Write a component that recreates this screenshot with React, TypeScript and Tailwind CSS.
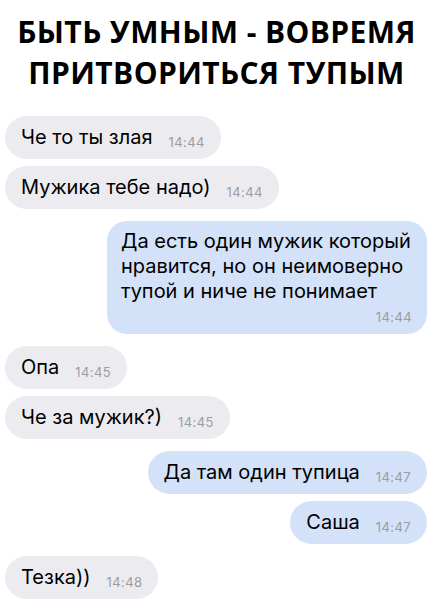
type Msg = { text: string; time: string; out?: boolean };

const messages: Msg[] = [
  { text: "Че то ты злая", time: "14:44" },
  { text: "Мужика тебе надо)", time: "14:44" },
  {
    text: "Да есть один мужик который нравится, но он неимоверно тупой и ниче не понимает",
    time: "14:44",
    out: true,
  },
  { text: "Опа", time: "14:45" },
  { text: "Че за мужик?)", time: "14:45" },
  { text: "Да там один тупица", time: "14:47", out: true },
  { text: "Саша", time: "14:47", out: true },
  { text: "Тезка))", time: "14:48" },
];

function Bubble({ msg, long }: { msg: Msg; long: boolean }) {
  const tone = msg.out ? "bg-[#d3e2f9]" : "bg-[#ececf0]";

  if (long) {
    return (
      <div className={`w-[320px] rounded-[20px] ${tone} pl-[14px] pr-[10px] pt-[8px] pb-[10px]`}>
        <div className="text-[20px] leading-[25px] text-black">{msg.text}</div>
        <div className="mt-[6px] pr-[5px] text-right text-[13px] leading-[14px] tracking-[0.4px] text-[#9b9ca2]">
          {msg.time}
        </div>
      </div>
    );
  }

  return (
    <div className={`flex items-end gap-[16px] rounded-full ${tone} px-[16px] py-[9px]`}>
      <span className="text-[20px] leading-[25px] text-black">{msg.text}</span>
      <span className="mb-[1px] text-[13px] leading-[14px] tracking-[0.4px] text-[#9b9ca2]">{msg.time}</span>
    </div>
  );
}

export default function App() {
  return (
    <div className="min-h-[604px] w-[433px] bg-white font-['Inter',sans-serif]">
      <h1 className="pt-[11px] text-center font-['Open_Sans',sans-serif] text-[30px] font-bold leading-[41px] tracking-[0.4px] text-black">
        БЫТЬ УМНЫМ - ВОВРЕМЯ
        <br />
        ПРИТВОРИТЬСЯ ТУПЫМ
      </h1>

      <div className="mt-[23px] flex flex-col pl-[5px] pr-[6px]">
        {messages.map((msg, i) => {
          const prev = messages[i - 1];
          const spacing = i === 0 ? "" : prev.out === msg.out ? "mt-[7px]" : "mt-[12px]";
          return (
            <div key={i} className={`flex ${msg.out ? "justify-end" : "justify-start"} ${spacing}`}>
              <Bubble msg={msg} long={msg.text.length > 40} />
            </div>
          );
        })}
      </div>
    </div>
  );
}
